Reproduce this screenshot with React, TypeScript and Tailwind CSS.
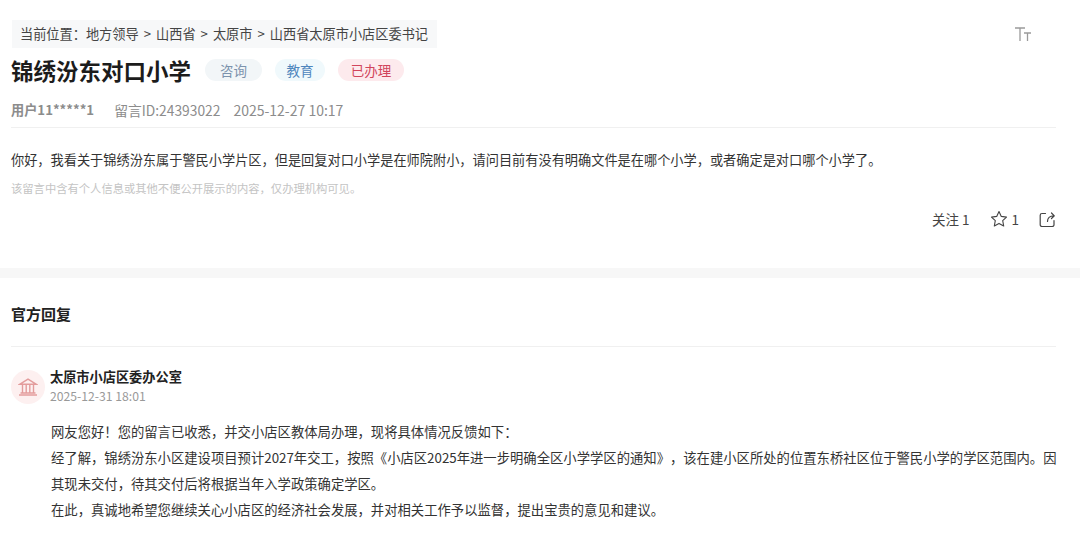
import React from "react";

const font = { fontFamily: '"Noto Sans CJK TC", "Noto Sans CJK SC", "Liberation Sans", sans-serif' };

function Pill({ label, cls }: { label: string; cls: string }) {
  return (
    <span className={`flex h-[22px] items-center justify-center rounded-full text-[13.5px] ${cls}`}>{label}</span>
  );
}

export default function App() {
  return (
    <div style={font} lang="zh-CN" className="h-[541px] w-[1080px] overflow-hidden bg-white text-[#333] [text-spacing-trim:space-all]">
      <section className="h-[268px] px-[11px] pt-[20px]">
        <div className="flex items-start justify-between">
          <div className="ml-[1px] flex h-[28px] items-center gap-[5px] bg-[#f7f8f9] pr-[9px] pl-[8px] text-[13.2px] text-[#444]">
            <span>当前位置：地方领导</span><span>&gt;</span><span>山西省</span><span>&gt;</span><span>太原市</span><span>&gt;</span><span>山西省太原市小店区委书记</span>
          </div>
          <svg width="18" height="16" viewBox="0 0 18 16" className="mt-[6px] mr-[37px]" fill="none" stroke="#9a9a9a" strokeWidth="1.3">
            <path d="M1 2h10M6 2v13M10 7h7M13.5 7v8" />
          </svg>
        </div>
        <div className="mt-[7px] flex h-[30px] items-center">
          <h1 className="text-[22.5px] leading-[30px] font-bold text-[#1c1c1c]">锦绣汾东对口小学</h1>
          <div className="ml-[14px] flex gap-[13px]">
            <Pill label="咨询" cls="w-[57px] bg-[#f2f6f8] text-[#7d93ad]" />
            <Pill label="教育" cls="w-[50px] bg-[#f0f9fc] text-[#4e86bd]" />
            <Pill label="已办理" cls="w-[66px] bg-[#fdeaed] text-[#d1455c]" />
          </div>
        </div>
        <div className="mt-[15px] flex h-[20px] items-center text-[14px] text-[#8c8c8c]">
          <span className="text-[13.2px] font-bold">用户11*****1</span>
          <span className="ml-[20px] text-[13.8px]">留言ID:24393022</span>
          <span className="ml-[13px]">2025-12-27 10:17</span>
        </div>
        <div className="mt-[7px] h-px w-[1045px] bg-[#f0f0f0]" />
        <p className="mt-[22px] text-[13.2px] leading-[20px] text-[#333]">
          你好，我看关于锦绣汾东属于警民小学片区，但是回复对口小学是在师院附小，请问目前有没有明确文件是在哪个小学，或者确定是对口哪个小学了。
        </p>
        <p className="mt-[9px] text-[11.3px] leading-[18px] text-[#c4c4c4]">该留言中含有个人信息或其他不便公开展示的内容，仅办理机构可见。</p>
        <div className="mt-[12px] flex h-[20px] items-center justify-end pr-[13px] text-[13.5px] text-[#444]">
          <span>关注 1</span>
          <svg width="18" height="18" viewBox="0 0 18 18" className="ml-[20px]" fill="none" stroke="#444" strokeWidth="1.1" strokeLinejoin="round">
            <path d="M9 1.5l2.3 4.9 5.2.7-3.8 3.6 1 5.3L9 13.4 4.3 16l1-5.3L1.5 7.1l5.2-.7z" />
          </svg>
          <span className="ml-[4px]">1</span>
          <svg width="17" height="17" viewBox="0 0 17 17" className="ml-[20px]" fill="none" stroke="#444" strokeWidth="1.2" strokeLinecap="round" strokeLinejoin="round">
            <path d="M6.5 2.5H3a1.8 1.8 0 0 0-1.8 1.8v9.4A1.8 1.8 0 0 0 3 15.5h10.2a1.8 1.8 0 0 0 1.8-1.8V9.5" />
            <path d="M8.5 10.5c0-3.6 2-5.6 6.5-5.6M12.5 2l2.8 2.9-2.8 2.6" />
          </svg>
        </div>
      </section>
      <div className="h-[10px] bg-[#f7f7f7]" />
      <section className="px-[11px]">
        <h2 className="mt-[26px] text-[15px] leading-[20px] font-bold text-[#222]">官方回复</h2>
        <div className="mt-[22px] h-px w-[1045px] bg-[#f0f0f0]" />
        <div className="mt-[21px] flex">
          <div className="mt-[2px] flex h-[34px] w-[34px] items-center justify-center rounded-full bg-[#fdf0f0]">
            <svg width="20" height="18" viewBox="0 0 20 18" fill="none" stroke="#e39c9c" strokeWidth="1.4">
              <path d="M2 6.2L10 1.2l8 5zM4.5 7v7.5M8.2 7v7.5M11.8 7v7.5M15.5 7v7.5M2.5 15h15M1 17h18" />
            </svg>
          </div>
          <div className="ml-[5px]">
            <div className="text-[13.2px] leading-[18px] font-bold text-[#222]">太原市小店区委办公室</div>
            <div className="mt-[1px] text-[12.2px] leading-[18px] text-[#999]">2025-12-31 18:01</div>
          </div>
        </div>
        <div className="mt-[14px] pl-[40px] text-[13.33px] leading-[26px] text-[#333]">
          <p>网友您好！您的留言已收悉，并交小店区教体局办理，现将具体情况反馈如下：</p>
          <p>经了解，锦绣汾东小区建设项目预计2027年交工，按照《小店区2025年进一步明确全区小学学区的通知》，该在建小区所处的位置东桥社区位于警民小学的学区范围内。因其现未交付，待其交付后将根据当年入学政策确定学区。</p>
          <p>在此，真诚地希望您继续关心小店区的经济社会发展，并对相关工作予以监督，提出宝贵的意见和建议。</p>
        </div>
      </section>
    </div>
  );
}
